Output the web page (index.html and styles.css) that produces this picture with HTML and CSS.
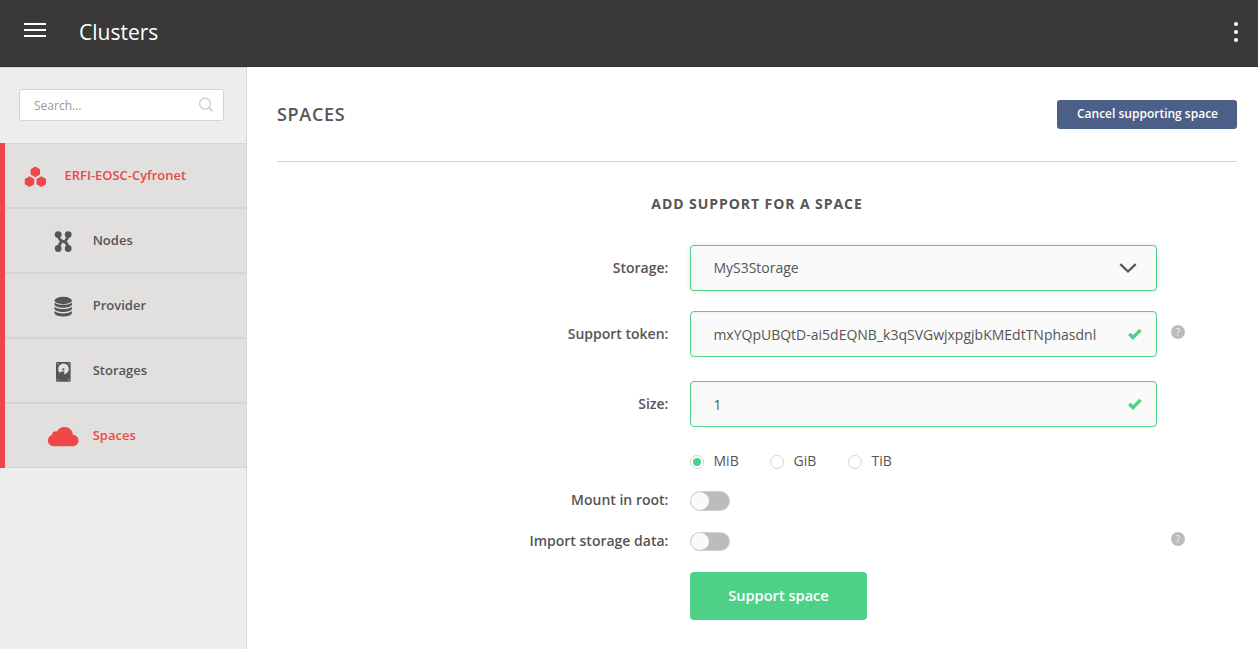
FILE: index.html
```html
<!DOCTYPE html>
<html lang="en">
<head>
<meta charset="utf-8">
<title>Clusters</title>
<link rel="stylesheet" href="styles.css">
</head>
<body>
<header class="topbar">
  <div class="burger"><span></span><span></span><span></span></div>
  <h1 class="topbar-title">Clusters</h1>
  <div class="more"><span></span><span></span><span></span></div>
</header>
<div class="layout">
  <aside class="sidebar">
    <div class="search">
      <span class="search-text">Search...</span>
      <svg width="16" height="16" viewBox="0 0 16 16" fill="none" stroke="#d2d2d2"><circle cx="7" cy="6.700" r="5.400" stroke-width="1.500"/><path d="M10.700 10.500L14.500 14.300" stroke-width="2"/></svg>
    </div>
    <nav class="menu">
      <a class="item item-root active">
        <svg class="icon" width="22" height="22" viewBox="0 0 22 22"><path d="M10.300 .5L15 3.200V8.500L10.300 11.200L5.600 8.500V3.200ZM4.500 10.300L9.200 13V18.300L4.500 21L-.2 18.300V13ZM16.300 10.300L21 13V18.300L16.300 21L11.600 18.300V13Z" fill="currentColor"/></svg>
        <span>ERFI-EOSC-Cyfronet</span>
      </a>
      <a class="item">
        <svg class="icon" width="30" height="22" viewBox="0 0 30 22"><g fill="currentColor"><circle cx="10.200" cy="3.600" r="3.400"/><circle cx="20.200" cy="3.600" r="3.400"/><circle cx="10.200" cy="17.500" r="3.400"/><circle cx="20.200" cy="17.500" r="3.400"/></g><path d="M10.700 4C10.700 8.500 12 9.300 15.200 10.500S19.800 12.500 19.800 17M19.800 4C19.800 8 18.700 8.700 17.200 10.200M10.700 17C10.700 13.500 11.800 12.400 13.400 10.900" fill="none" stroke="currentColor" stroke-width="2.800"/></svg>
        <span>Nodes</span>
      </a>
      <a class="item">
        <svg class="icon" width="30" height="22" viewBox="0 0 30 22"><g fill="currentColor"><ellipse cx="15.200" cy="4.500" rx="8.700" ry="3.700"/><path d="M6.500 6.400C9 9.600 21.400 9.600 23.900 6.400V8.800C22.500 12.800 7.900 12.800 6.500 8.800ZM6.500 10.700C9 13.900 21.400 13.900 23.900 10.700V13.100C22.500 17.100 7.900 17.100 6.500 13.100ZM6.500 15C9 18.200 21.400 18.200 23.900 15V17.300C22.500 21.600 7.900 21.600 6.500 17.300Z"/></g></svg>
        <span>Provider</span>
      </a>
      <a class="item">
        <svg class="icon" width="30" height="22" viewBox="0 0 30 22"><rect x="8" y="1" width="14.600" height="19.700" rx="1.200" fill="currentColor"/><path d="M11.600 11.700A5.400 5.400 0 1 1 15.500 13.400C17 11.800 16.600 10.200 15 10.200C13.500 10.200 12.900 11.300 11.600 11.700Z" fill="#e1e0de"/><circle cx="15.300" cy="8.300" r="1.100" fill="currentColor"/><g fill="#e1e0de"><circle cx="9.900" cy="2.800" r=".65"/><circle cx="20.700" cy="2.800" r=".65"/><circle cx="9.900" cy="18.800" r=".65"/><circle cx="20.700" cy="18.800" r=".65"/></g></svg>
        <span>Storages</span>
      </a>
      <a class="item active">
        <svg class="icon" width="30" height="22" viewBox="0 0 30 22"><path d="M6 20.300C2.300 20.300-.1 17.800-.1 14.600C-.1 11.800 1.600 9.700 4 9C3.900 6.300 6.500 4.500 9 5.400C10.500 2.700 13.200 1.100 16.500 1.100C21.300 1.100 24.600 4.400 24.800 8.800C28.400 9.100 30.500 11.500 30.500 14.500C30.500 17.800 28 20.300 24.500 20.300Z" fill="currentColor"/></svg>
        <span>Spaces</span>
      </a>
    </nav>
  </aside>
  <main class="content">
    <div class="page-head">
      <h2 class="page-title">SPACES</h2>
      <button class="btn-cancel">Cancel supporting space</button>
    </div>
    <h3 class="form-title">ADD SUPPORT FOR A SPACE</h3>
    <form class="form">
      <label class="label">Storage:</label>
      <div class="field select"><span class="value">MyS3Storage</span><svg class="chevron" width="18" height="12" viewBox="0 0 18 12"><path d="M1.300 2.200L9 9.500L16.700 2.200" fill="none" stroke="#555" stroke-width="2.300"/></svg></div>
      <span></span>

      <label class="label">Support token:</label>
      <div class="field"><span class="value">mxYQpUBQtD-ai5dEQNB_k3qSVGwjxpgjbKMEdtTNphasdnl</span><svg class="check" width="14" height="12" viewBox="0 0 14 12"><path d="M0 7L2.400 4.800L5 7L11.300 .7L13.800 3.100L5 11.900Z" fill="#4fd088"/></svg></div>
      <span class="help">?</span>

      <label class="label">Size:</label>
      <div class="field"><span class="value">1</span><svg class="check" width="14" height="12" viewBox="0 0 14 12"><path d="M0 7L2.400 4.800L5 7L11.300 .7L13.800 3.100L5 11.900Z" fill="#4fd088"/></svg></div>
      <span></span>

      <span></span>
      <div class="units">
        <span class="unit unit-mib"><i class="radio checked"></i>MiB</span>
        <span class="unit unit-gib"><i class="radio"></i>GiB</span>
        <span class="unit"><i class="radio"></i>TiB</span>
      </div>
      <span></span>

      <label class="label label-toggle">Mount in root:</label>
      <div class="toggle"></div>
      <span></span>

      <label class="label label-toggle">Import storage data:</label>
      <div class="toggle toggle-import"></div>
      <span class="help help-import">?</span>

      <span></span>
      <button type="button" class="btn-submit">Support space</button>
    </form>
  </main>
</div>
</body>
</html>
```

FILE: styles.css
```css
* { box-sizing: border-box; }
body { margin: 0; height: 649px; overflow: hidden; background: #fff; color: #555; font-family: "Open Sans", "Noto Sans", sans-serif; font-size: 14px; }
h1, h2, h3 { margin: 0; }
button { border: 0; font-family: inherit; color: #fff; font-weight: 600; }
svg { display: block; overflow: visible; flex: none; }

.topbar { height: 67px; background: #393939; border-bottom: 1px solid #303030; display: flex; align-items: flex-start; padding: 0 20px 0 24px; color: #fff; }
.burger { width: 22px; margin-top: 23px; display: flex; flex-direction: column; gap: 4px; }
.burger span { height: 2px; background: #fff; }
.topbar-title { margin-left: 33px; font-size: 21px; line-height: 30px; margin-top: 17px; font-weight: 400; flex: 1; }
.more { display: flex; flex-direction: column; gap: 4px; margin-top: 22px; }
.more span { width: 4px; height: 4px; border-radius: 50%; background: #fff; }

.layout { display: flex; height: 582px; }
.sidebar { width: 247px; flex: none; background: #ededed; border-right: 1px solid #d4d4d4; border-top: 1px solid #d4d4d4; }
.search { margin: 21px 22px 22px 19px; height: 32px; background: #fff; border: 1px solid #d4d4d4; border-radius: 3px; display: flex; align-items: center; justify-content: space-between; padding: 0 9px 0 14px; font-size: 12px; color: #999; }
.menu { border-left: 5px solid #ed4749; }
.item { height: 65px; background: #e1e0de; border-top: 1px solid #d4d4d4; border-bottom: 1px solid #d4d4d4; display: flex; align-items: center; padding-left: 43px; gap: 14.7px; font-size: 13px; font-weight: 600; line-height: 18px; }
.item span { margin-bottom: 2px; }
.item-root { padding-left: 20px; gap: 17.6px; font-size: 12.95px; }
.item .icon { margin-top: 3px; }
.active { color: #ed4749; }

.content { flex: 1; padding: 0 21px 0 30px; }
.page-head { height: 95px; border-bottom: 1px solid #d4d4d4; display: flex; justify-content: space-between; align-items: center; }
.page-title { font-size: 18px; font-weight: 600; letter-spacing: .7px; }
.btn-cancel { width: 180px; height: 29px; background: #4c5f87; border-radius: 3px; font-size: 12px; padding: 0 0 2px 1px; }
.form-title { margin-top: 32px; text-align: center; font-size: 14px; line-height: 20px; letter-spacing: .93px; font-weight: 700; }

.form { margin-top: 31px; display: grid; grid-template-columns: 391px 467px 14px; column-gap: 22px; grid-template-rows: 46px 66px 70px 58px 44px 41px 50px; justify-content: start; align-items: end; }
.label { text-align: right; font-weight: 600; line-height: 46px; margin-right: -.4px; }
.field { height: 46px; border: 1px solid #4fd088; border-radius: 4px; background: #fafafa; display: flex; justify-content: space-between; align-items: center; padding: 0 14px 0 22.4px; box-shadow: inset 0 1px 2px rgba(0,0,0,.04); }
.select { padding-right: 19px; box-shadow: 0 0 5px rgba(0,0,0,.12); }
.select .value { margin-bottom: 2px; }
.value { white-space: nowrap; }
.help { width: 14px; height: 14px; border-radius: 50%; background: #bcbcbc; color: #f1f1f1; font-size: 10px; line-height: 14px; text-align: center; margin: 0 0 18px -8px; }
.help-import { margin-bottom: 24px; }
.units { display: flex; height: 58px; align-items: flex-end; line-height: 20px; padding-bottom: 14px; }
.unit { display: flex; align-items: center; gap: 9.5px; }
.unit-mib { width: 80px; }
.unit-gib { width: 78px; }
.radio { width: 14px; height: 14px; border: 1px solid #d4d4d4; border-radius: 50%; margin-top: 2px; display: flex; align-items: center; justify-content: center; }
.checked::before { content: ""; width: 8px; height: 8px; border-radius: 50%; background: #4fd088; }
.toggle { width: 40px; height: 20px; border: 1px solid #d0d0d0; border-radius: 10px; background: #bcbcbc; margin-bottom: 18px; }
.toggle::before { content: ""; display: block; width: 18px; height: 100%; border-radius: 50%; background: #fafafa; }
.toggle-import { height: 19px; margin-bottom: 19px; }
.label-toggle { line-height: 20px; margin-bottom: 19px; }
.btn-submit { width: 177px; height: 48px; background: #4fd088; border-radius: 4px; font-size: 14.6px; padding: 0 0 2px; }
```
